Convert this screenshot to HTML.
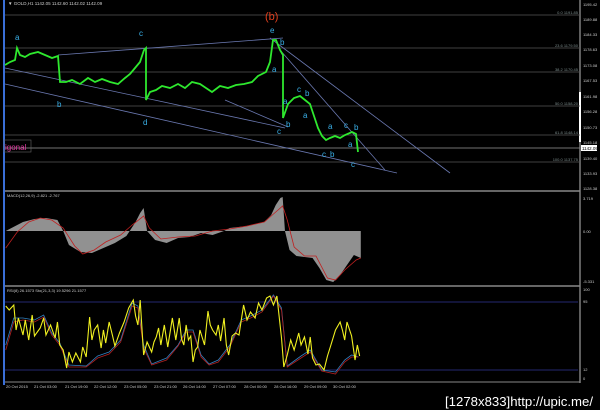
<!DOCTYPE html>
<html><head><meta charset="utf-8"><style>
html,body{margin:0;padding:0;background:#000;width:600px;height:410px;overflow:hidden}
svg{display:block}
text{font-family:"Liberation Sans",sans-serif}
</style></head><body>
<svg width="600" height="410" viewBox="0 0 600 410" xmlns="http://www.w3.org/2000/svg">
<rect width="600" height="410" fill="#000"/>
<rect x="3" y="0" width="2" height="385" fill="#3a6fd8"/>
<line x1="580" y1="0" x2="580" y2="383" stroke="#bbb" stroke-width="1"/>
<rect x="579" y="92" width="2" height="50" fill="#fff"/>
<line x1="5" y1="191" x2="580" y2="191" stroke="#888" stroke-width="1.5"/>
<line x1="5" y1="286" x2="580" y2="286" stroke="#888" stroke-width="1.5"/>
<line x1="5" y1="382" x2="580" y2="382" stroke="#888" stroke-width="1"/>
<text x="8" y="5" font-size="4.5" fill="#ccc">▼ GOLD,H1  1142.05 1142.60 1142.02 1142.09</text>
<g stroke="#555" stroke-width="0.8">
<line x1="5" y1="15" x2="580" y2="15"/>
<line x1="5" y1="48" x2="580" y2="48"/>
<line x1="5" y1="72" x2="580" y2="72"/>
<line x1="5" y1="106" x2="580" y2="106"/>
<line x1="5" y1="135" x2="580" y2="135"/>
<line x1="5" y1="162" x2="580" y2="162"/>
</g>
<line x1="5" y1="148" x2="580" y2="148" stroke="#999" stroke-width="0.8"/>
<g font-size="4" fill="#7a8a8a" text-anchor="end">
<text x="578" y="14">0.0 1191.85</text>
<text x="578" y="47">23.6 1179.50</text>
<text x="578" y="71">38.2 1170.45</text>
<text x="578" y="105">50.0 1158.20</text>
<text x="578" y="134">61.8 1148.14</text>
<text x="578" y="161">100.0 1137.75</text>
</g>
<g font-size="4" fill="#ccc">
<text x="583" y="6">1195.42</text><text x="583" y="21">1189.88</text><text x="583" y="36">1184.33</text>
<text x="583" y="51">1178.63</text><text x="583" y="67">1173.08</text><text x="583" y="82">1167.53</text>
<text x="583" y="98">1161.98</text><text x="583" y="113">1156.28</text><text x="583" y="129">1150.73</text>
<text x="583" y="144">1145.18</text><text x="583" y="160">1139.40</text><text x="583" y="175">1133.93</text>
<text x="583" y="190">1128.38</text>
<text x="583" y="200">3.719</text><text x="583" y="233">0.00</text><text x="583" y="283">-5.331</text>
<text x="583" y="291">100</text><text x="583" y="303">95</text><text x="583" y="371">12</text><text x="583" y="380">0</text>
</g>
<rect x="581" y="145" width="16" height="6" fill="#fff"/>
<text x="582" y="150" font-size="4.5" fill="#000">1142.09</text>
<g stroke="#6a78b0" stroke-width="0.8" fill="none">
<line x1="58" y1="55" x2="283" y2="38"/>
<line x1="5" y1="68" x2="285" y2="128"/>
<line x1="5" y1="84" x2="397" y2="173"/>
<line x1="225" y1="100" x2="288" y2="127"/>
<line x1="270" y1="38" x2="450" y2="173"/>
<line x1="280" y1="50" x2="385" y2="170"/>
</g>
<polyline fill="none" stroke="#2ee82e" stroke-width="1.8" points="5,65 10,62 15,60 17,48 20,55 25,57 30,54 38,52 45,55 52,58 58,56 60,82 66,82 72,80 80,84 88,78 95,82 102,79 110,82 118,84 125,78 130,74 135,68 140,62 144,50 146,48 146,100 150,92 156,90 162,86 170,88 178,84 185,88 192,82 200,84 206,88 212,92 220,86 228,88 236,85 244,84 252,82 258,76 266,72 270,62 273,40 276,40 280,50 283,55 283,118 288,104 294,98 300,96 305,100 310,104 314,116 318,128 322,136 326,140 330,138 335,136 340,138 345,135 352,132 356,134 358,152"/>
<g font-size="8" fill="#3ab0e8">
<text x="15" y="40">a</text><text x="57" y="107">b</text><text x="139" y="36">c</text><text x="143" y="125">d</text>
<text x="270" y="33">e</text><text x="280" y="45">b</text><text x="272" y="72">a</text><text x="283" y="104">a</text>
<text x="286" y="127">b</text><text x="277" y="134">c</text><text x="297" y="92">c</text><text x="305" y="96">b</text>
<text x="303" y="118">a</text><text x="328" y="129">a</text><text x="344" y="128">c</text><text x="354" y="130">b</text>
<text x="348" y="147">a</text><text x="330" y="157">b</text><text x="322" y="157">c</text><text x="351" y="167">c</text>
</g>
<text x="265" y="20" font-size="11" fill="#e0401e">(b)</text>
<rect x="4" y="140" width="27" height="12" fill="none" stroke="#666" stroke-width="0.6"/>
<text x="5" y="150" font-size="8" fill="#e03aa0">igonal</text>
<text x="7" y="197" font-size="4" fill="#ccc">MACD(12,26,9) -2.821 -2.767</text>
<g transform="matrix(1.149 0 0 1 0 0)">
<path d="M5,231 L10,228 20,222 30,219 40,218 50,220 55,231 60,245 70,252 80,253 90,248 100,243 110,236 118,222 122,213 125,208 128,231 135,240 145,243 155,238 165,237 175,233 185,235 195,231 200,228 215,226 230,222 236,215 240,205 244,198 246,197 248,231 252,250 258,256 265,257 272,258 278,268 284,280 290,282 296,275 302,265 308,255 314,258 L314,231 Z" fill="#aaa" opacity="0.85"/>
<polyline vector-effect="non-scaling-stroke" fill="none" stroke="#c02020" stroke-width="0.8" points="5,248 15,232 25,222 35,218 45,220 55,228 65,246 72,254 82,250 92,242 105,235 115,225 125,216 130,228 140,239 155,237 170,236 185,231 200,229 215,226 230,222 240,212 246,206 250,220 256,247 265,256 275,256 285,278 292,280 300,270 310,260 314,258"/>
</g>
<text x="7" y="292" font-size="4" fill="#ccc">RSI(8) 26.1573  Sto(21,3,3) 19.5296 21.1577</text>
<line x1="5" y1="302" x2="578" y2="302" stroke="#232870" stroke-width="1"/>
<line x1="5" y1="370" x2="578" y2="370" stroke="#232870" stroke-width="1"/>
<g transform="matrix(1.149 0 0 1 0 0)" fill="none">
<polyline vector-effect="non-scaling-stroke" stroke="#3080c0" stroke-width="0.8" points="5,345 12,318 20,318 30,320 38,315 45,333 52,343 60,365 75,366 85,356 95,352 105,340 115,303 120,306 125,345 132,364 145,358 155,345 162,330 168,330 175,355 182,364 190,360 200,345 210,320 220,315 228,310 238,295 245,308 250,366 262,356 270,350 280,370 292,372 300,360 306,355 312,357"/>
<polyline vector-effect="non-scaling-stroke" stroke="#b02020" stroke-width="0.8" points="5,350 12,322 20,320 30,322 38,317 45,335 52,345 60,367 75,367 85,358 95,354 105,342 115,306 120,308 125,348 132,365 145,360 155,346 162,332 168,332 175,357 182,365 190,362 200,347 210,322 220,317 228,312 238,296 245,310 250,367 262,358 270,352 280,371 292,374 300,362 306,357 312,357"/>
<polyline vector-effect="non-scaling-stroke" stroke="#f0f020" stroke-width="1.1" points="5,306 8,310 12,305 14,330 16,318 20,335 22,320 25,340 28,315 30,336 35,328 38,318 40,335 44,325 48,338 50,322 52,345 55,350 58,368 60,352 63,362 66,353 70,362 72,347 75,357 78,317 80,340 82,330 85,325 88,348 90,330 92,343 95,322 98,336 100,346 104,333 108,322 112,308 116,300 118,316 120,325 122,300 125,355 128,342 132,352 134,342 136,337 138,328 140,345 143,325 146,347 150,318 153,340 156,318 158,339 160,345 162,325 164,340 166,336 168,362 170,350 172,347 174,330 178,345 181,311 183,325 185,330 188,335 190,325 192,341 195,318 197,345 199,355 202,336 205,333 208,335 212,305 215,320 218,312 222,318 225,303 228,310 232,298 235,296 238,305 241,296 245,338 247,367 250,355 253,340 256,350 260,333 262,345 265,337 268,354 270,337 272,358 275,365 278,364 282,370 285,356 288,345 292,330 296,322 298,330 300,340 302,322 306,336 309,360 311,345 313,356"/>
</g>
<g font-size="4" fill="#ccc">
<text x="6" y="388">20 Oct 2015</text><text x="34" y="388">21 Oct 03:00</text><text x="65" y="388">21 Oct 19:00</text>
<text x="94" y="388">22 Oct 12:00</text><text x="124" y="388">23 Oct 05:00</text><text x="154" y="388">23 Oct 21:00</text>
<text x="183" y="388">26 Oct 14:00</text><text x="213" y="388">27 Oct 07:00</text><text x="244" y="388">28 Oct 00:00</text>
<text x="274" y="388">28 Oct 16:00</text><text x="304" y="388">29 Oct 09:00</text><text x="333" y="388">30 Oct 02:00</text>
</g>
<text x="445" y="406" font-size="13" fill="#fff" textLength="148" lengthAdjust="spacingAndGlyphs">[1278x833]http://upic.me/</text>
</svg>
</body></html>
